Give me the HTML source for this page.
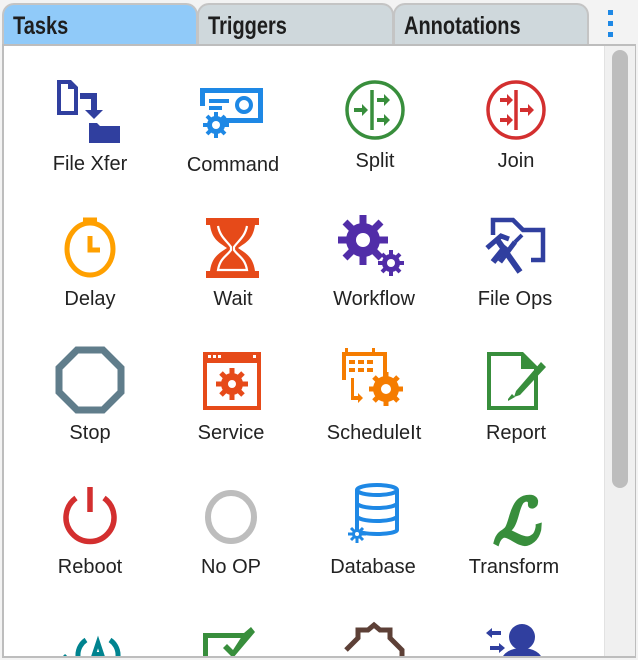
<!DOCTYPE html>
<html><head><meta charset="utf-8"><style>
body{margin:0;width:638px;height:660px;background:#f3f3f3;position:relative;overflow:hidden;font-family:"Liberation Sans",sans-serif}
.tab{position:absolute;top:3px;height:41px;border:2px solid #c4c4c4;border-bottom:none;border-radius:12px 12px 0 0;box-sizing:border-box;font-weight:bold;font-size:25px;color:#1e1e1e;padding-left:9px;line-height:42px;white-space:nowrap}
.tab span{display:inline-block;transform:scaleX(0.8);transform-origin:0 50%}
.panel{position:absolute;left:2px;top:44px;width:634px;height:614px;border:2px solid #bdbdbd;box-sizing:border-box;background:#fff}
.lab{position:absolute;width:140px;text-align:center;font-size:20px;color:#222;line-height:20px}
</style></head><body>
<div class="tab" style="left:2px;width:196px;background:#90caf9"><span>Tasks</span></div>
<div class="tab" style="left:197px;width:197px;background:#cfd8dc"><span>Triggers</span></div>
<div class="tab" style="left:393px;width:196px;background:#cfd8dc"><span>Annotations</span></div>
<div style="position:absolute;left:608px;top:10px;width:5px;height:5px;background:#1e88e5"></div>
<div style="position:absolute;left:608px;top:21px;width:5px;height:5px;background:#1e88e5"></div>
<div style="position:absolute;left:608px;top:32px;width:5px;height:5px;background:#1e88e5"></div>
<div class="panel"></div>
<div style="position:absolute;left:604px;top:46px;width:30px;height:610px;background:#f0f0f0;border-left:1px solid #e2e2e2"></div>
<div style="position:absolute;left:612px;top:50px;width:16px;height:438px;background:#bdbdbd;border-radius:8px"></div>

<div class="lab" style="left:20px;top:154px">File Xfer</div>
<div class="lab" style="left:163px;top:155px">Command</div>
<div class="lab" style="left:305px;top:151px">Split</div>
<div class="lab" style="left:446px;top:151px">Join</div>
<div class="lab" style="left:20px;top:289px">Delay</div>
<div class="lab" style="left:163px;top:289px">Wait</div>
<div class="lab" style="left:304px;top:289px">Workflow</div>
<div class="lab" style="left:445px;top:289px">File Ops</div>
<div class="lab" style="left:20px;top:423px">Stop</div>
<div class="lab" style="left:161px;top:423px">Service</div>
<div class="lab" style="left:304px;top:423px">ScheduleIt</div>
<div class="lab" style="left:446px;top:423px">Report</div>
<div class="lab" style="left:20px;top:557px">Reboot</div>
<div class="lab" style="left:161px;top:557px">No OP</div>
<div class="lab" style="left:303px;top:557px">Database</div>
<div class="lab" style="left:444px;top:557px">Transform</div>

<svg style="position:absolute;left:0;top:0" width="638" height="656" viewBox="0 0 638 656">
<!-- File Xfer -->
<g fill="#303f9f">
<path d="M57 80h14l7 7v28h-21zM61 84v27h13v-22h-6v-5z" fill-rule="evenodd"/>
<path d="M80 93h17v17h6l-9 9-9-9h6v-11h-11z"/>
<path d="M89 123h8l3 3h20v17h-31z"/>
</g>
<!-- Command -->
<g fill="#1e88e5">
<path d="M200 88h63v35h-40v-5h35v-25h-53v13h-5z" />
<rect x="209" y="99" width="20" height="4"/><rect x="209" y="106" width="13" height="4"/>
<circle cx="244" cy="105" r="7" fill="none" stroke="#1e88e5" stroke-width="4"/>
<circle cx="216" cy="125" r="9"/>
<g stroke="#1e88e5" stroke-width="4"><path d="M216 112v26M203 125h26M207 116l18 18M225 116l-18 18"/></g>
<circle cx="216" cy="125" r="4" fill="#fff"/>
</g>
<!-- Split -->
<g stroke="#388e3c" fill="none" stroke-width="3.5"><circle cx="375" cy="110" r="28"/><path d="M372 90v40"/></g>
<g fill="#388e3c"><path d="M354 108h8v-4l6 6-6 6v-4h-8z"/><path d="M377 98h7v-4l6 6-6 6v-4h-7zM377 118h7v-4l6 6-6 6v-4h-7z"/></g>
<!-- Join -->
<g stroke="#d32f2f" fill="none" stroke-width="3.5"><circle cx="516" cy="110" r="28"/><path d="M516 90v40"/></g>
<g fill="#d32f2f"><path d="M500 98h7v-4l6 6-6 6v-4h-7zM500 118h7v-4l6 6-6 6v-4h-7z"/><path d="M520 108h8v-4l6 6-6 6v-4h-8z"/></g>
<!-- Delay -->
<g stroke="#ffa000" fill="none" stroke-width="5"><ellipse cx="90" cy="249" rx="23" ry="26"/><path d="M83 220h14M90 220v5M90 236v14h10"/></g>
<!-- Wait -->
<g fill="#e64a19">
<rect x="206" y="218" width="53" height="7"/><rect x="206" y="271" width="53" height="7"/>
<path d="M210 225h45c-2 15-10 18-17 23 7 5 15 8 17 23h-45c2-15 10-18 17-23-7-5-15-8-17-23z"/>
</g>
<path d="M218 226c2 11 9 15 13 21v3c-4 6-11 8-13 20h29c-2-12-9-14-13-20v-3c4-6 11-10 13-21" fill="none" stroke="#fff" stroke-width="2.2"/>
<!-- Workflow gears -->
<g fill="#512da8">
<circle cx="363" cy="240" r="17"/>
<g stroke="#512da8" stroke-width="7"><path d="M363 215v50M338 240h50M345 222l36 36M381 222l-36 36"/></g>
<circle cx="363" cy="240" r="7" fill="#fff"/>
<circle cx="391" cy="263" r="9"/>
<g stroke="#512da8" stroke-width="4"><path d="M391 250v26M378 263h26M382 254l18 18M400 254l-18 18"/></g>
<circle cx="391" cy="263" r="4" fill="#fff"/>
</g>
<!-- File Ops -->
<g fill="none" stroke="#303f9f" stroke-width="4.5"><path d="M493 235v-15h20l10 10h20v30h-12"/></g>
<g stroke="#303f9f" stroke-linecap="butt"><path d="M496 238l24 34" stroke-width="6"/><path d="M506 246l-13 16" stroke-width="6"/><path d="M487 248l14-12 8 3" stroke-width="5" fill="none"/><path d="M500 262l15-20" stroke-width="5"/><path d="M515 242l7-7" stroke-width="4"/></g>
<!-- Stop -->
<path d="M77 350h26l18 18v24l-18 18h-26l-18-18v-24z" fill="none" stroke="#607d8b" stroke-width="7"/>
<!-- Service -->
<g fill="#e64a19"><path d="M203 352h58v58h-58zM207 363v43h50v-43z" fill-rule="evenodd"/>
<circle cx="232" cy="384" r="11"/>
<g stroke="#e64a19" stroke-width="5"><path d="M232 368v32M216 384h32M221 373l22 22M243 373l-22 22"/></g>
<circle cx="232" cy="384" r="4" fill="#fff"/></g>
<g fill="#fff"><rect x="208" y="355" width="3" height="3"/><rect x="213" y="355" width="3" height="3"/><rect x="218" y="355" width="3" height="3"/><rect x="253" y="355" width="3" height="3"/></g>
<!-- ScheduleIt -->
<g fill="#f57c00"><path d="M342 352h45v25h-4v-21h-37v24h-4z"/>
<rect x="345" y="348" width="3" height="6"/><rect x="372" y="348" width="3" height="6"/>
<rect x="349" y="360" width="6" height="4"/><rect x="358" y="360" width="6" height="4"/><rect x="367" y="360" width="6" height="4"/>
<rect x="349" y="368" width="6" height="4"/><rect x="358" y="368" width="6" height="4"/><rect x="367" y="368" width="6" height="4"/>
<path d="M351 378h3v18h4v-3l5 5-5 5v-3h-7z"/>
<circle cx="386" cy="389" r="13"/>
<g stroke="#f57c00" stroke-width="5"><path d="M386 372v34M369 389h34M374 377l24 24M398 377l-24 24"/></g>
<circle cx="386" cy="389" r="5" fill="#fff"/></g>
<!-- Report -->
<g fill="#388e3c"><path d="M487 352h36l15 15v43h-51zM491 356v50h43v-37h-13v-13z" fill-rule="evenodd"/>
<path d="M541 362l5 5-26 28-6 2 2-6z"/><path d="M508 399l4-5 3 3-7 4z"/></g>
<!-- Reboot -->
<g fill="none" stroke="#d32f2f" stroke-width="5.5"><path d="M76 498a24 24 0 1 0 28 0"/><path d="M90 487v25"/></g>
<!-- No OP -->
<ellipse cx="231" cy="517" rx="23" ry="24" fill="none" stroke="#bdbdbd" stroke-width="6"/>
<!-- Database -->
<g fill="none" stroke="#1e88e5" stroke-width="4"><ellipse cx="377" cy="490" rx="20" ry="5"/><path d="M357 490v26a20 5 0 0 0 40 0v-26M357 503a20 5 0 0 0 40 0M357 516v14a20 4 0 0 0 40 0v-14"/></g>
<g fill="#1e88e5"><circle cx="357" cy="534" r="5"/><g stroke="#1e88e5" stroke-width="3"><path d="M357 525v18M348 534h18M351 528l12 12M363 528l-12 12"/></g><circle cx="357" cy="534" r="2" fill="#fff"/></g>
<!-- Transform -->
<text x="516" y="543" text-anchor="middle" font-family="DejaVu Serif,serif" font-style="italic" font-weight="bold" font-size="62" fill="#388e3c" stroke="#388e3c" stroke-width="2.5">ℒ</text>
<!-- Row5 partials -->
<g fill="none" stroke="#00838f" stroke-width="5"><path d="M86 640a18 18 0 0 0 0 30M110 640a18 18 0 0 1 0 30"/><path d="M92 660l6-18 6 18M94 654h8" stroke-width="4"/></g>
<path d="M64 655l4 4" stroke="#00838f" stroke-width="3"/>
<g fill="#388e3c"><path d="M203 633h45v5h-40v20h-5z"/><path d="M244 633l7-6 4 5-22 26-10-10 4-4 6 6z"/></g>
<path d="M346 650l12-12v-8h10l6-5 6 5h10v8l12 12v8" fill="none" stroke="#5d4037" stroke-width="5"/>
<g fill="#303f9f"><circle cx="522" cy="637" r="13"/><path d="M502 660a20 12 0 0 1 40 0z"/>
<path d="M486 633l6-5v3h9v4h-9v3zM505 648l-6 5v-3h-9v-4h9v-3z"/></g>
</svg>
</body></html>
